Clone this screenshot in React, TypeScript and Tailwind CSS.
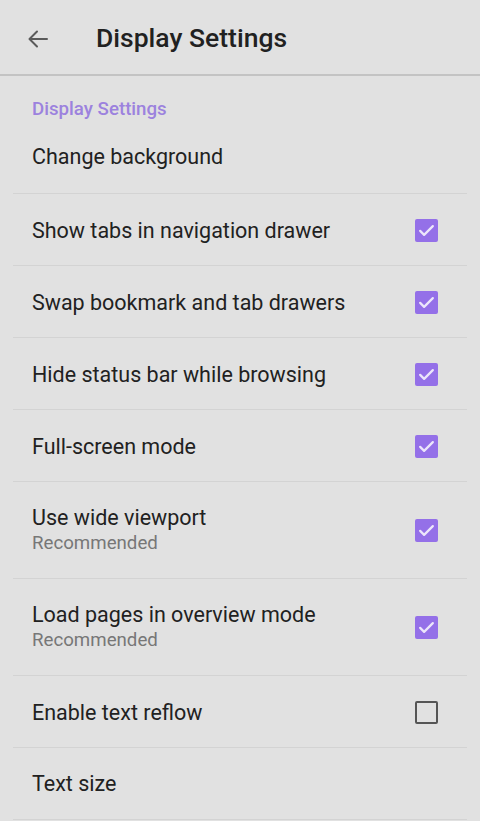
import React from "react";

type Item = {
  title: string;
  summary?: string;
  checked?: boolean;
};

const items: Item[] = [
  { title: "Show tabs in navigation drawer", checked: true },
  { title: "Swap bookmark and tab drawers", checked: true },
  { title: "Hide status bar while browsing", checked: true },
  { title: "Full-screen mode", checked: true },
  { title: "Use wide viewport", summary: "Recommended", checked: true },
  { title: "Load pages in overview mode", summary: "Recommended", checked: true },
  { title: "Enable text reflow", checked: false },
];

function CheckBox({ checked }: { checked: boolean }) {
  if (checked) {
    return (
      <div className="w-[23px] h-[23px] rounded-[2px] bg-[#9470e8] flex items-center justify-center">
        <svg width="19" height="19" viewBox="0 0 24 24" fill="none">
          <path d="M4 12.5l5 5 11-11" stroke="#ece6fb" strokeWidth="2.8" strokeLinecap="round" strokeLinejoin="round" />
        </svg>
      </div>
    );
  }
  return <div className="w-[23px] h-[23px] rounded-[2px] border-[2.5px] border-[#555]" />;
}

export default function App() {
  return (
    <main
      className="min-h-screen w-[480px] bg-[#e1e1e1] text-[#212121]"
      style={{ fontFamily: "Roboto, 'Liberation Sans', sans-serif" }}
    >
      {/* HEADER */}
      <header className="h-[76px] pt-[3px] flex items-center border-b-2 border-[#c3c3c3]">
        <div className="w-[96px] flex pl-[26px]">
          <svg width="24" height="24" viewBox="0 0 24 24" fill="none">
            <path d="M21 12H4M11 4.5L3.5 12l7.5 7.5" stroke="#5a5a5a" strokeWidth="2" strokeLinecap="round" strokeLinejoin="round" />
          </svg>
        </div>
        <h1 className="text-[26.5px] font-medium leading-none">Display Settings</h1>
      </header>

      {/* CATEGORY */}
      <div className="pt-[23px] pb-[2px] px-[32px] text-[18.7px] leading-[20px] font-medium text-[#9c82de]">
        Display Settings
      </div>

      <div className="h-[72px] flex items-center px-[32px] text-[21.5px]">Change background</div>

      {/* LIST */}
      {items.map((item) => (
        <div key={item.title}>
          <div className="mx-[13px] h-px bg-[#d3d3d3]" />
          <div
            className={`flex items-center px-[32px] pr-[42px] ${item.summary ? "h-[96px]" : "h-[71px] pt-[1px]"}`}
          >
            <div className="flex-1">
              <p className="text-[21.5px] leading-[27px]">{item.title}</p>
              {item.summary && (
                <p className="text-[18.7px] leading-[25px] text-[#777]">{item.summary}</p>
              )}
            </div>
            <CheckBox checked={!!item.checked} />
          </div>
        </div>
      ))}

      <div className="mx-[13px] h-px bg-[#d3d3d3]" />
      <div className="h-[71px] pt-[1px] flex items-center px-[32px] text-[21.5px]">Text size</div>
      <div className="mx-[13px] h-px bg-[#d3d3d3]" />
    </main>
  );
}
